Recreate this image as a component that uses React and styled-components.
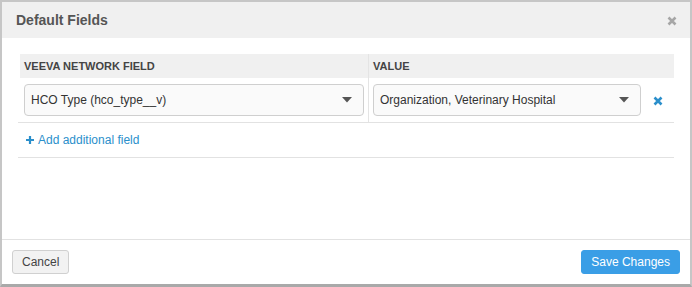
import React from "react";
import styled, { createGlobalStyle } from "styled-components";

const Global = createGlobalStyle`
    html, body {
        margin: 0;
        padding: 0;
        background: #fff;
    }
    * {
        box-sizing: border-box;
    }
`

const XIcon = ({ size = 10, color = "#999" }) => (
    <svg width={size} height={size} viewBox="0 0 10 10">
        <path d="M1.5 1.5 L8.5 8.5 M8.5 1.5 L1.5 8.5" stroke={color} strokeWidth="2.6" strokeLinecap="butt" />
    </svg>
)

const PlusIcon = () => (
    <svg width="8" height="8" viewBox="0 0 8 8">
        <path d="M4 0 V8 M0 4 H8" stroke="#2b8fcb" strokeWidth="2.2" />
    </svg>
)

const Caret = () => (
    <svg width="10" height="6" viewBox="0 0 10 6">
        <path d="M0 0 H10 L5 5.5 Z" fill="#555" />
    </svg>
)

const fields = [
    { name: "HCO Type (hco_type__v)", value: "Organization, Veterinary Hospital" },
]

const App = () => {
    return (
        <Modal>
            <Global />
            <Header>
                <Title>Default Fields</Title>
                <Close><XIcon size={10} color="#a6a6a6" /></Close>
            </Header>
            <Body>
                <Table>
                    <HeadRow>
                        <HeadCell>Veeva Network Field</HeadCell>
                        <HeadCell divider>Value</HeadCell>
                    </HeadRow>
                    {fields.map((f) => (
                        <Row key={f.name}>
                            <Cell>
                                <Select>
                                    <span>{f.name}</span>
                                    <Caret />
                                </Select>
                            </Cell>
                            <Cell divider>
                                <Select>
                                    <span>{f.value}</span>
                                    <Caret />
                                </Select>
                                <Remove><XIcon size={10} color="#2b8fcb" /></Remove>
                            </Cell>
                        </Row>
                    ))}
                    <AddRow>
                        <AddLink><PlusIcon />Add additional field</AddLink>
                    </AddRow>
                </Table>
            </Body>
            <Footer>
                <Button>Cancel</Button>
                <Button primary>Save Changes</Button>
            </Footer>
        </Modal>
    )
}

const Modal = styled.div`
    width: 692px;
    height: 287px;
    display: flex;
    flex-direction: column;
    border: 2px solid #c6c6c6;
    border-bottom-width: 3px;
    border-bottom-color: #a9a9a9;
    background: #fff;
    font-family: "Liberation Sans", Arial, sans-serif;
    color: #333;
`

const Header = styled.div`
    height: 36px;
    flex-shrink: 0;
    display: flex;
    align-items: center;
    justify-content: space-between;
    padding: 0 13px 0 14px;
    background: #f0f0f0;
`

const Title = styled.h1`
    margin: 0;
    font-size: 14px;
    font-weight: 700;
    color: #555;
`

const Close = styled.span`
    display: flex;
    margin-top: 2px;
`

const Body = styled.div`
    flex: 1;
    padding: 16px 16px 0;
`

const Table = styled.div`
    display: flex;
    flex-direction: column;
`

const HeadRow = styled.div`
    display: grid;
    grid-template-columns: 348px 1fr;
    height: 24px;
    margin-left: 2px;
    background: #f0f0f0;
`

const HeadCell = styled.div`
    display: flex;
    align-items: center;
    padding-left: 4px;
    border-left: ${(p) => (p.divider ? "1px solid #e4e4e4" : "none")};
    font-size: 11px;
    font-weight: 700;
    text-transform: uppercase;
    color: #444;
`

const Row = styled.div`
    display: grid;
    grid-template-columns: 350px 1fr;
    height: 45px;
    border-bottom: 1px solid #e2e2e2;
`

const Cell = styled.div`
    display: flex;
    align-items: center;
    padding: ${(p) => (p.divider ? "0 0 0 4px" : "0 4px 0 6px")};
    border-left: ${(p) => (p.divider ? "1px solid #e4e4e4" : "none")};
`

const Select = styled.div`
    flex: 1;
    height: 32px;
    display: flex;
    align-items: center;
    justify-content: space-between;
    padding: 0 11px 0 6px;
    border: 1px solid #cfcfcf;
    border-radius: 4px;
    background: #fafafa;
    font-size: 12px;
    color: #333;
`

const Remove = styled.span`
    display: flex;
    width: 33px;
    justify-content: center;
    margin-top: 1px;
`

const AddRow = styled.div`
    height: 35px;
    display: flex;
    align-items: center;
    padding-left: 8px;
    border-bottom: 1px solid #e2e2e2;
`

const AddLink = styled.a`
    font-size: 12px;
    color: #2b8fcb;
    cursor: pointer;
    display: flex;
    align-items: center;
    gap: 4px;

    svg {
        margin-top: -1px;
    }
`

const Footer = styled.div`
    height: 45px;
    flex-shrink: 0;
    display: flex;
    align-items: center;
    justify-content: space-between;
    padding: 0 10px;
    border-top: 1px solid #e2e2e2;
`

const Button = styled.button`
    height: 24px;
    padding: 0 9px;
    border-radius: 3px;
    font-family: "Liberation Sans", Arial, sans-serif;
    font-size: 12px;
    border: 1px solid ${(p) => (p.primary ? "#3a9ee6" : "#d0d0d0")};
    background: ${(p) => (p.primary ? "#3a9ee6" : "#f2f2f2")};
    color: ${(p) => (p.primary ? "#fff" : "#444")};
    cursor: pointer;
`

export default App
